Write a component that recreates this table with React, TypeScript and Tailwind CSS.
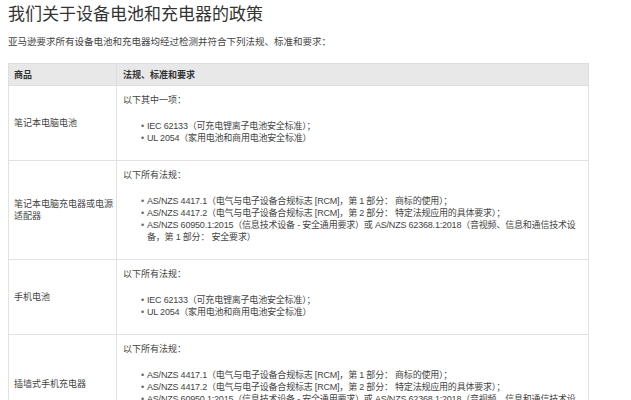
import React from "react";

type Row = {
  name: string;
  intro: string;
  items: string[];
};

const rows: Row[] = [
  {
    name: "笔记本电脑电池",
    intro: "以下其中一项：",
    items: ["IEC 62133（可充电锂离子电池安全标准）；", "UL 2054（家用电池和商用电池安全标准）"],
  },
  {
    name: "笔记本电脑充电器或电源适配器",
    intro: "以下所有法规：",
    items: [
      "AS/NZS 4417.1（电气与电子设备合规标志 [RCM]，第 1 部分： 商标的使用）；",
      "AS/NZS 4417.2（电气与电子设备合规标志 [RCM]，第 2 部分： 特定法规应用的具体要求）；",
      "AS/NZS 60950.1:2015（信息技术设备 - 安全通用要求）或 AS/NZS 62368.1:2018（音视频、信息和通信技术设备，第 1 部分： 安全要求）",
    ],
  },
  {
    name: "手机电池",
    intro: "以下所有法规：",
    items: ["IEC 62133（可充电锂离子电池安全标准）；", "UL 2054（家用电池和商用电池安全标准）"],
  },
  {
    name: "插墙式手机充电器",
    intro: "以下所有法规：",
    items: [
      "AS/NZS 4417.1（电气与电子设备合规标志 [RCM]，第 1 部分： 商标的使用）；",
      "AS/NZS 4417.2（电气与电子设备合规标志 [RCM]，第 2 部分： 特定法规应用的具体要求）；",
      "AS/NZS 60950.1:2015（信息技术设备 - 安全通用要求）或 AS/NZS 62368.1:2018（音视频、信息和通信技术设备，第 1 部分： 安全要求）",
    ],
  },
];

export default function App() {
  return (
    <div className="h-[400px] w-[631px] overflow-hidden bg-white px-[8px] pt-[4px] font-['Liberation_Sans','Noto_Sans_CJK_SC',sans-serif] text-[#444]">
      <h1 className="text-[17px] leading-[22px] text-[#333]">我们关于设备电池和充电器的政策</h1>
      <p className="mt-[10px] text-[9.5px] leading-[12px] text-[#444]">
        亚马逊要求所有设备电池和充电器均经过检测并符合下列法规、标准和要求：
      </p>

      <table className="mt-[15px] w-[581px] table-fixed border-collapse text-[9px] leading-[12px]">
        <colgroup>
          <col className="w-[108px]" />
          <col />
        </colgroup>
        <thead>
          <tr className="h-[22px] bg-[#e8e8e8]">
            <th className="border border-[#dedede] pl-[5px] text-left font-semibold text-[#333]">商品</th>
            <th className="border border-[#dedede] pl-[6px] text-left font-semibold text-[#333]">法规、标准和要求</th>
          </tr>
        </thead>
        <tbody>
          {rows.map((row) => (
            <tr key={row.name}>
              <td className="border border-[#e2e2e2] pl-[5px] pr-[2px] align-middle">{row.name}</td>
              <td className="border border-[#e2e2e2] pb-[16px] pl-[6px] pr-[1px] pt-[8px] align-top">
                <p>{row.intro}</p>
                <ul className="mt-[14px]">
                  {row.items.map((item) => (
                    <li key={item} className="flex pl-[18px] tracking-[-0.2px]">
                      <span className="w-[6px] shrink-0 text-[#666]">•</span>
                      <span>{item}</span>
                    </li>
                  ))}
                </ul>
              </td>
            </tr>
          ))}
        </tbody>
      </table>
    </div>
  );
}
